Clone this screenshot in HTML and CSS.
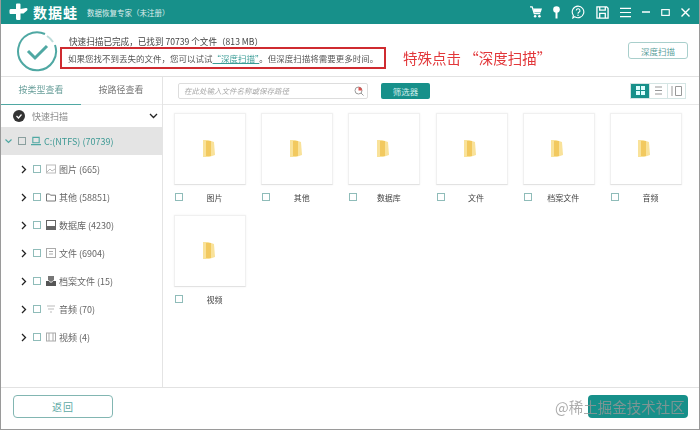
FILE: index.html
```html
<!DOCTYPE html>
<html lang="zh">
<head>
<meta charset="utf-8">
<title>数据蛙</title>
<link rel="stylesheet" href="styles.css">
</head>
<body>
<div class="window">
  <header class="titlebar">
    <svg class="logo" width="19" height="18" viewBox="0 0 19 18"><path d="M7 1.500Q7 .5 8 .5h2.500q1 0 1 1V6l5.500-1q1.500 0 1.500 1.200 0 1-1 1.800l-3 2.500h-3v5.500q0 1-1 1H8.500q-1.500 0-1.500-1.500V11H1.500Q.5 11 .5 9.500V7.500Q.5 6 1.500 6H7z" fill="#fff"/></svg>
    <span class="brand">数据蛙</span>
    <span class="tagline">数据恢复专家（未注册）</span>
    <div class="winbtns">
      <svg width="12" height="12" viewBox="0 0 14 14"><path d="M0 1h2.500l2.500 8h7" fill="none" stroke="#fff" stroke-width="1.500"/><path d="M3.500 3H14l-1.500 4.500H5z" fill="#fff"/><circle cx="6" cy="12" r="1.500" fill="#fff"/><circle cx="11" cy="12" r="1.500" fill="#fff"/></svg>
      <svg width="7" height="13" viewBox="0 0 7 13"><circle cx="3.500" cy="3.500" r="3.300" fill="#fff"/><path d="M3.500 6v6.500" stroke="#fff" stroke-width="2"/></svg>
      <svg width="14" height="14" viewBox="0 0 15 15"><path d="M7.500 1.200a6.200 6.200 0 1 1-3.500 11.300L2 14l.5-3A6.200 6.200 0 0 1 7.500 1.200z" fill="none" stroke="#fff" stroke-width="1.200"/><path d="M5.600 6a2 2 0 1 1 2.800 1.800c-.7.400-.9.700-.9 1.500" fill="none" stroke="#fff" stroke-width="1.100"/><circle cx="7.500" cy="11" r=".8" fill="#fff"/></svg>
      <svg width="13" height="13" viewBox="0 0 14 14"><path d="M1 1h10.500L13 2.500V13H1zM4 1v3.500h6V1M4 13V8h6v5" fill="none" stroke="#fff" stroke-width="1.400"/></svg>
      <svg width="11" height="11" viewBox="0 0 12 12"><path d="M0 1.500h12M0 6h12M0 10.500h12" stroke="#fff" stroke-width="1.200"/></svg>
      <svg width="8" height="8" viewBox="0 0 8 8"><path d="M0 4h8" stroke="#fff" stroke-width="1.500"/></svg>
      <svg width="9" height="7" viewBox="0 0 10 8"><rect x=".7" y=".7" width="8.600" height="6.600" fill="none" stroke="#fff" stroke-width="1.300"/></svg>
      <svg width="9" height="9" viewBox="0 0 9 9"><path d="M.5.500l8 8M8.500.500l-8 8" stroke="#fff" stroke-width="1.400"/></svg>
    </div>
  </header>

  <section class="summary">
    <svg class="done" width="44" height="44" viewBox="0 0 44 44"><path d="M30 5A19 19 0 1 0 40 16" fill="none" stroke="#4fa8a3" stroke-width="2"/><path d="M32 7a19 19 0 0 1 6 6" fill="none" stroke="#bcdcda" stroke-width="2"/><path d="M13 22l7 7 12-12" fill="none" stroke="#4fa8a3" stroke-width="3"/></svg>
    <div class="messages">
      <p class="msg-top">快速扫描已完成，已找到 70739 个文件（813 MB）</p>
      <div class="notice-row">
        <p class="notice">如果您找不到丢失的文件，您可以试试<a class="link">“深度扫描”</a>。但深度扫描将需要更多时间。</p>
        <span class="annotation">特殊点击 “深度扫描”</span>
      </div>
    </div>
    <button class="deep">深度扫描</button>
  </section>

  <div class="main">
    <aside class="sidebar">
      <div class="tabs">
        <span class="tab active">按类型查看</span>
        <span class="tab">按路径查看</span>
      </div>
      <div class="scan-head">
        <svg width="12" height="12" viewBox="0 0 12 12"><circle cx="6" cy="6" r="6" fill="#333"/><path d="M3.500 6l2 2 3-3.500" fill="none" stroke="#fff" stroke-width="1.200"/></svg>
        <span class="scan-label">快速扫描</span>
        <svg class="scan-caret" width="9" height="6" viewBox="0 0 9 6"><path d="M1 1l3.500 3.500L8 1" fill="none" stroke="#222" stroke-width="1.300"/></svg>
      </div>
      <div class="row drive">
        <svg width="7" height="5" viewBox="0 0 7 5"><path d="M.5.500l3 3 3-3" fill="none" stroke="#4fa8a3" stroke-width="1.200"/></svg>
        <span class="check"></span>
        <svg width="10" height="10" viewBox="0 0 11 10"><path d="M2 1h7v6H2zM0 9h11" fill="none" stroke="#4fa8a3" stroke-width="1.200"/></svg>
        <span class="drive-label">C:(NTFS) (70739)</span>
      </div>
      <ul class="tree">
        <li class="row"><svg class="caret" width="6" height="9" viewBox="0 0 6 9"><path d="M1 1l3.500 3.500L1 8" fill="none" stroke="#222" stroke-width="1.300"/></svg><span class="check"></span><svg width="10" height="10" viewBox="0 0 10 10"><rect x=".5" y="1" width="9" height="8" fill="none" stroke="#bbb"/><path d="M1 8l3-3 2 2 3-2" fill="none" stroke="#bbb"/></svg><span>图片 (665)</span></li>
        <li class="row"><svg class="caret" width="6" height="9" viewBox="0 0 6 9"><path d="M1 1l3.500 3.500L1 8" fill="none" stroke="#222" stroke-width="1.300"/></svg><span class="check"></span><svg width="10" height="10" viewBox="0 0 10 10"><path d="M.5 2h3l1 1.200h5V9H.5z" fill="none" stroke="#777"/></svg><span>其他 (58851)</span></li>
        <li class="row"><svg class="caret" width="6" height="9" viewBox="0 0 6 9"><path d="M1 1l3.500 3.500L1 8" fill="none" stroke="#222" stroke-width="1.300"/></svg><span class="check"></span><svg width="10" height="10" viewBox="0 0 10 10"><rect x=".5" y=".5" width="9" height="9" fill="none" stroke="#666"/><rect x=".5" y="6" width="9" height="3.500" fill="#666"/></svg><span>数据库 (4230)</span></li>
        <li class="row"><svg class="caret" width="6" height="9" viewBox="0 0 6 9"><path d="M1 1l3.500 3.500L1 8" fill="none" stroke="#222" stroke-width="1.300"/></svg><span class="check"></span><svg width="10" height="10" viewBox="0 0 10 10"><rect x=".5" y=".5" width="9" height="9" fill="none" stroke="#aaa"/><path d="M3 3.500h4M3 6h4" stroke="#aaa"/></svg><span>文件 (6904)</span></li>
        <li class="row"><svg class="caret" width="6" height="9" viewBox="0 0 6 9"><path d="M1 1l3.500 3.500L1 8" fill="none" stroke="#222" stroke-width="1.300"/></svg><span class="check"></span><svg width="10" height="10" viewBox="0 0 10 10"><path d="M0 5h3l1 1.500h2L7 5h3v5H0z" fill="#555"/><path d="M2 4V0h6v4L5 6z" fill="#777"/></svg><span>档案文件 (15)</span></li>
        <li class="row"><svg class="caret" width="6" height="9" viewBox="0 0 6 9"><path d="M1 1l3.500 3.500L1 8" fill="none" stroke="#222" stroke-width="1.300"/></svg><span class="check"></span><svg width="10" height="10" viewBox="0 0 10 10"><path d="M1 2h8M2 5h6M4 8h2" fill="none" stroke="#bbb"/></svg><span>音频 (70)</span></li>
        <li class="row"><svg class="caret" width="6" height="9" viewBox="0 0 6 9"><path d="M1 1l3.500 3.500L1 8" fill="none" stroke="#222" stroke-width="1.300"/></svg><span class="check"></span><svg width="10" height="10" viewBox="0 0 10 10"><rect x=".5" y="1" width="9" height="8" fill="none" stroke="#aaa"/><path d="M3 1v8M7 1v8" stroke="#aaa"/></svg><span>视频 (4)</span></li>
      </ul>
    </aside>

    <div class="content">
      <div class="toolbar">
        <div class="search">
          <span class="search-hint">在此处输入文件名称或保存路径</span>
          <svg width="10" height="10" viewBox="0 0 10 10"><circle cx="4.500" cy="4.500" r="3.500" fill="none" stroke="#999"/><path d="M4.500 1a3.500 3.500 0 0 1 3.500 3.500H4.500z" fill="#d9534f"/><path d="M7 7l2.500 2.500" stroke="#999"/></svg>
        </div>
        <button class="filter">筛选器</button>
        <div class="views">
          <span class="view on"><svg width="9" height="9" viewBox="0 0 9 9"><path d="M0 0h4v4H0zM5 0h4v4H5zM0 5h4v4H0zM5 5h4v4H5z" fill="#dff"/></svg></span>
          <span class="view"><svg width="9" height="9" viewBox="0 0 9 9"><path d="M1 1h7M1 4.500h7M1 8h7" stroke="#999"/></svg></span>
          <span class="view"><svg width="11" height="10" viewBox="0 0 11 10"><path d="M1 0v10M4.500 .5h6v9h-6z" fill="none" stroke="#999"/></svg></span>
        </div>
      </div>
      <div class="grid">
        <figure class="card"><div class="thumb"><svg class="folder" width="12" height="18" viewBox="0 0 12 18"><path d="M0 0h5l6 2 1 13-6 2-6 0z" fill="#f9e29a"/><path d="M3 1h5v15H3z" fill="#f2c95f"/></svg></div><figcaption><span class="check"></span><span class="name">图片</span></figcaption></figure>
        <figure class="card"><div class="thumb"><svg class="folder" width="12" height="18" viewBox="0 0 12 18"><path d="M0 0h5l6 2 1 13-6 2-6 0z" fill="#f9e29a"/><path d="M3 1h5v15H3z" fill="#f2c95f"/></svg></div><figcaption><span class="check"></span><span class="name">其他</span></figcaption></figure>
        <figure class="card"><div class="thumb"><svg class="folder" width="12" height="18" viewBox="0 0 12 18"><path d="M0 0h5l6 2 1 13-6 2-6 0z" fill="#f9e29a"/><path d="M3 1h5v15H3z" fill="#f2c95f"/></svg></div><figcaption><span class="check"></span><span class="name">数据库</span></figcaption></figure>
        <figure class="card"><div class="thumb"><svg class="folder" width="12" height="18" viewBox="0 0 12 18"><path d="M0 0h5l6 2 1 13-6 2-6 0z" fill="#f9e29a"/><path d="M3 1h5v15H3z" fill="#f2c95f"/></svg></div><figcaption><span class="check"></span><span class="name">文件</span></figcaption></figure>
        <figure class="card"><div class="thumb"><svg class="folder" width="12" height="18" viewBox="0 0 12 18"><path d="M0 0h5l6 2 1 13-6 2-6 0z" fill="#f9e29a"/><path d="M3 1h5v15H3z" fill="#f2c95f"/></svg></div><figcaption><span class="check"></span><span class="name">档案文件</span></figcaption></figure>
        <figure class="card"><div class="thumb"><svg class="folder" width="12" height="18" viewBox="0 0 12 18"><path d="M0 0h5l6 2 1 13-6 2-6 0z" fill="#f9e29a"/><path d="M3 1h5v15H3z" fill="#f2c95f"/></svg></div><figcaption><span class="check"></span><span class="name">音频</span></figcaption></figure>
        <figure class="card"><div class="thumb"><svg class="folder" width="12" height="18" viewBox="0 0 12 18"><path d="M0 0h5l6 2 1 13-6 2-6 0z" fill="#f9e29a"/><path d="M3 1h5v15H3z" fill="#f2c95f"/></svg></div><figcaption><span class="check"></span><span class="name">视频</span></figcaption></figure>
      </div>
    </div>
  </div>

  <footer class="footer">
    <button class="back">返回</button>
    <button class="next"></button>
    <span class="watermark">@稀土掘金技术社区</span>
  </footer>
</div>
</body>
</html>
```

FILE: styles.css
```css
* { box-sizing: border-box; }
html, body { margin: 0; padding: 0; }
body {
  width: 700px;
  height: 430px;
  overflow: hidden;
  background: #fff;
  font-family: "Noto Sans CJK SC", "Noto Sans", sans-serif;
  color: #555;
}
p, ul, figure { margin: 0; padding: 0; }
ul { list-style: none; }
button { font-family: inherit; padding: 0; cursor: pointer; }

.window {
  width: 700px;
  height: 430px;
  display: flex;
  flex-direction: column;
  position: relative;
  border-left: 1px solid #9a9a9a;
  border-right: 1px solid #9a9a9a;
  border-bottom: 1px solid #9a9a9a;
  filter: blur(.35px);
}

.titlebar {
  height: 24px;
  flex: none;
  display: flex;
  align-items: center;
  background: #17908a;
  padding-left: 8px;
  color: #fff;
}
.logo { flex: none; }
.brand {
  font-size: 14px;
  font-weight: 700;
  letter-spacing: 1px;
  margin-left: 5px;
  line-height: 24px;
}
.tagline { font-size: 7.500px; margin-left: 9px; opacity: .85; }
.winbtns {
  margin-left: auto;
  display: flex;
  align-items: center;
  gap: 11px;
  padding-right: 9px;
}

.summary {
  height: 53px;
  flex: none;
  display: flex;
  border-bottom: 1px solid #e2e2e2;
  position: relative;
}
.done { flex: none; margin: 5px 0 0 14px; }
.messages { margin-left: 1px; width: 500px; }
.msg-top { font-size: 8.600px; line-height: 12px; margin: 11px 0 0 9px; color: #444; }
.notice-row { display: flex; align-items: center; }
.notice {
  width: 326px;
  height: 22px;
  border: 2px solid #cf2b30;
  font-size: 8.500px;
  line-height: 18px;
  padding-left: 6px;
  white-space: nowrap;
  color: #555;
}
.link { color: #3a9c96; text-decoration: underline; }
.annotation {
  font-size: 14.500px;
  color: #e2373a;
  margin-left: 17px;
  white-space: nowrap;
  line-height: 20px;
}
.deep {
  position: absolute;
  left: 627px;
  top: 18px;
  width: 60px;
  height: 17px;
  background: #fff;
  border: 1px solid #a9cfcc;
  border-radius: 3px;
  font-size: 8.500px;
  color: #5a9e9a;
}

.main { flex: 1; display: flex; min-height: 0; }

.sidebar {
  width: 162px;
  flex: none;
  border-right: 1px solid #e4e4e4;
}
.tabs { height: 28px; display: flex; border-bottom: 1px solid #eee; }
.tab {
  width: 80px;
  font-size: 9px;
  line-height: 26px;
  text-align: center;
  color: #777;
}
.tab.active { color: #6ba09c; border-bottom: 1px solid #4fa8a3; height: 28px; }
.scan-head {
  height: 22px;
  display: flex;
  align-items: center;
  padding-left: 12px;
  font-size: 9px;
  color: #888;
}
.scan-label { margin-left: 7px; }
.scan-caret { margin-left: auto; margin-right: 4px; }

.row {
  height: 28px;
  display: flex;
  align-items: center;
  font-size: 9px;
  color: #666;
  padding-left: 20px;
}
.row svg { flex: none; }
.row .check { margin: 0 5px 0 6px; }
.row > span:last-child { margin-left: 3px; white-space: nowrap; }
.drive { background: #e4e4e4; padding-left: 4px; color: #3f9a95; }
.drive .check { margin: 0 5px 0 6px; border-color: #8a9f9e; background: transparent; }

.check {
  display: inline-block;
  flex: none;
  width: 8px;
  height: 8px;
  border: 1px solid #8fbcb9;
  background: #fff;
}

.content { flex: 1; min-width: 0; }
.toolbar {
  height: 28px;
  display: flex;
  align-items: center;
  border-bottom: 1px solid #e8e8e8;
  padding-left: 15px;
}
.search {
  width: 190px;
  height: 16px;
  display: flex;
  align-items: center;
  justify-content: space-between;
  border: 1px solid #ddd;
  border-radius: 2px;
  padding: 0 3px 0 5px;
}
.search-hint { font-size: 7.500px; color: #aaa; font-style: italic; }
.filter {
  width: 49px;
  height: 16px;
  margin-left: 13px;
  background: #17908a;
  border: 0;
  border-radius: 2px;
  color: #cfeeec;
  font-size: 8.500px;
}
.views {
  margin-left: auto;
  margin-right: 13px;
  display: flex;
  height: 16px;
  border: 1px solid #d5e5e4;
}
.view {
  width: 18px;
  display: flex;
  align-items: center;
  justify-content: center;
  border-left: 1px solid #d5e5e4;
}
.view:first-child { border-left: 0; }
.view.on { background: #17908a; }

.grid {
  display: grid;
  grid-template-columns: repeat(6, 72px);
  column-gap: 15.200px;
  grid-auto-rows: 102px;
  padding: 8px 0 0 11px;
}
.thumb {
  width: 72px;
  height: 72px;
  display: flex;
  align-items: center;
  justify-content: center;
  border: 1px solid #f0f0f0;
  border-bottom: 1px solid #e2e2e2;
  box-shadow: 0 0 2px #f2f2f2;
}
.folder { margin: 0 3px 0 0; }
figcaption {
  display: flex;
  align-items: center;
  height: 24px;
  font-size: 8px;
  color: #444;
}
figcaption .check { margin-left: 1px; }
.name { flex: 1; text-align: center; white-space: nowrap; }

.footer {
  height: 42px;
  flex: none;
  display: flex;
  align-items: center;
  justify-content: space-between;
  border-top: 1px solid #e2e2e2;
  padding: 0 11px 5px 12px;
  position: relative;
}
.back {
  width: 100px;
  height: 23px;
  background: #fff;
  border: 1px solid #82b6b2;
  border-radius: 4px;
  font-size: 10px;
  letter-spacing: 1px;
  color: #5da9a4;
}
.next {
  width: 100px;
  height: 23px;
  border: 0;
  border-radius: 4px;
  background: #17908a;
}
.watermark {
  position: absolute;
  left: 554px;
  top: 9px;
  font-size: 14.500px;
  line-height: 20px;
  color: rgba(150,150,150,.8);
  white-space: nowrap;
}
```
